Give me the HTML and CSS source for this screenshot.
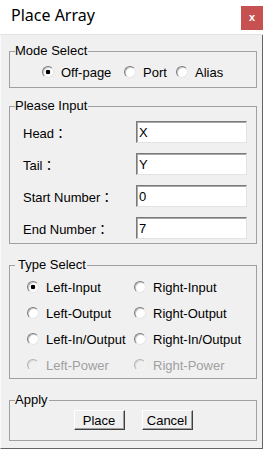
FILE: index.html
```html
<!DOCTYPE html>
<html lang="en">
<head>
    <meta charset="UTF-8">
    <meta name="viewport" content="width=device-width, initial-scale=1.0">
    <title>Place Array</title>
    <link rel="stylesheet" href="styles.css">
</head>
<body>

<div class="dialog">
    <div class="titlebar">
        <span class="title">Place Array</span>
        <span class="close">x</span>
    </div>

    <div class="panel">
        <fieldset class="group group-mode">
            <legend>Mode Select</legend>
            <div class="mode-row">
                <label class="option"><span class="radio checked"></span>Off-page</label>
                <label class="option"><span class="radio"></span>Port</label>
                <label class="option"><span class="radio"></span>Alias</label>
            </div>
        </fieldset>

        <fieldset class="group group-input">
            <legend>Please Input</legend>
            <div class="input-grid">
                <span class="label">Head：</span>
                <input type="text" value="X">
                <span class="label">Tail：</span>
                <input type="text" value="Y">
                <span class="label">Start Number：</span>
                <input type="text" value="0">
                <span class="label">End Number：</span>
                <input type="text" value="7">
            </div>
        </fieldset>

        <fieldset class="group group-type">
            <legend class="legend-indent">Type Select</legend>
            <div class="type-grid">
                <label class="option"><span class="radio checked"></span>Left-Input</label>
                <label class="option"><span class="radio"></span>Right-Input</label>
                <label class="option"><span class="radio"></span>Left-Output</label>
                <label class="option"><span class="radio"></span>Right-Output</label>
                <label class="option"><span class="radio"></span>Left-In/Output</label>
                <label class="option"><span class="radio"></span>Right-In/Output</label>
                <label class="option disabled"><span class="radio"></span>Left-Power</label>
                <label class="option disabled"><span class="radio"></span>Right-Power</label>
            </div>
        </fieldset>

        <fieldset class="group group-apply">
            <legend>Apply</legend>
            <div class="buttons">
                <button type="button">Place</button>
                <button type="button">Cancel</button>
            </div>
        </fieldset>
    </div>
</div>

</body>
</html>
```

FILE: styles.css
```css
body {
    margin: 0;
    background: #ffffff;
    font-family: "Liberation Sans", Arial, "Noto Sans CJK SC", sans-serif;
    font-size: 13px;
    color: #000;
}
.dialog {
    width: 263px;
}
.titlebar {
    display: flex;
    height: 34px;
    background: #ffffff;
    border-bottom: 1px solid #e3e3e3;
}
.title {
    font-family: "Noto Sans", sans-serif;
    font-size: 16px;
    line-height: 20px;
    margin: 5px 0 0 11px;
}
.close {
    margin-left: auto;
    margin-top: 6px;
    width: 22px;
    height: 24px;
    background: #c75050;
    color: #fff;
    font-weight: bold;
    font-size: 11px;
    line-height: 22px;
    text-align: center;
}
.panel {
    box-sizing: border-box;
    height: 414px;
    background: #f0f0f0;
    border-left: 1px solid #fafafa;
    border-right: 1px solid #646464;
    border-bottom: 1px solid #646464;
    padding-top: 8px;
}
.group {
    box-sizing: border-box;
    width: 248px;
    margin: 0 0 0 8px;
    border: 1px solid #a0a0a0;
    padding: 0 5px;
    min-width: 0;
}
.group legend {
    padding: 0 1px 0 0;
    line-height: 16px;
}
.group .legend-indent {
    padding-left: 3px;
}
.group-mode {
    padding-top: 4px;
    padding-bottom: 6px;
}
.group-input {
    margin-top: 10px;
    padding-top: 7px;
    padding-bottom: 4px;
}
.group-type {
    margin-top: 13px;
    padding-top: 5px;
    padding-bottom: 4px;
}
.group-apply {
    margin-top: 13px;
    padding-top: 2px;
    padding-bottom: 10px;
}
.mode-row {
    display: grid;
    grid-template-columns: 82px 52px auto;
    padding-left: 27px;
}
.option {
    display: flex;
    align-items: center;
    gap: 7px;
    height: 18px;
    white-space: nowrap;
}
.radio {
    box-sizing: border-box;
    flex: none;
    width: 12px;
    height: 12px;
    border-radius: 50%;
    border: 1px solid;
    border-color: #7c7c7c #e6e6e6 #e6e6e6 #7c7c7c;
    background: #ffffff;
    box-shadow: inset 1px 1px 0 #c8c8c8;
}
.radio.checked {
    background: radial-gradient(circle, #000 0 2px, #ffffff 2.6px);
}
.option.disabled {
    color: #a0a0a0;
}
.option.disabled .radio {
    background: #f0f0f0;
    border-color: #b4b4b4 #f4f4f4 #f4f4f4 #b4b4b4;
    box-shadow: inset 1px 1px 0 #dcdcdc;
}
.input-grid {
    display: grid;
    grid-template-columns: 113px 111px;
    row-gap: 10px;
    align-items: center;
    padding-left: 8px;
}
.label {
    font-family: "Liberation Sans", Arial, "Noto Sans CJK TC", sans-serif;
}
.input-grid input {
    box-sizing: border-box;
    width: 111px;
    height: 22px;
    margin: 0;
    padding: 0 0 0 2px;
    border: 1px solid;
    border-color: #7a7a7a #e3e3e3 #e3e3e3 #7a7a7a;
    box-shadow: inset 1px 1px 0 #a8a8a8;
    background: #ffffff;
    font-family: "Liberation Sans", Arial, sans-serif;
    font-size: 13px;
    color: #000;
}
.type-grid {
    display: grid;
    grid-template-columns: 107px auto;
    row-gap: 8px;
    padding-left: 12px;
}
.buttons {
    display: flex;
    justify-content: center;
    gap: 17px;
}
.buttons button {
    box-sizing: border-box;
    width: 51px;
    height: 20px;
    padding: 0;
    border: 1px solid;
    border-color: #ffffff #404040 #404040 #ffffff;
    box-shadow: inset -1px -1px 0 #a0a0a0;
    background: #f0f0f0;
    font-family: "Liberation Sans", Arial, sans-serif;
    font-size: 13px;
    color: #000;
}
```
